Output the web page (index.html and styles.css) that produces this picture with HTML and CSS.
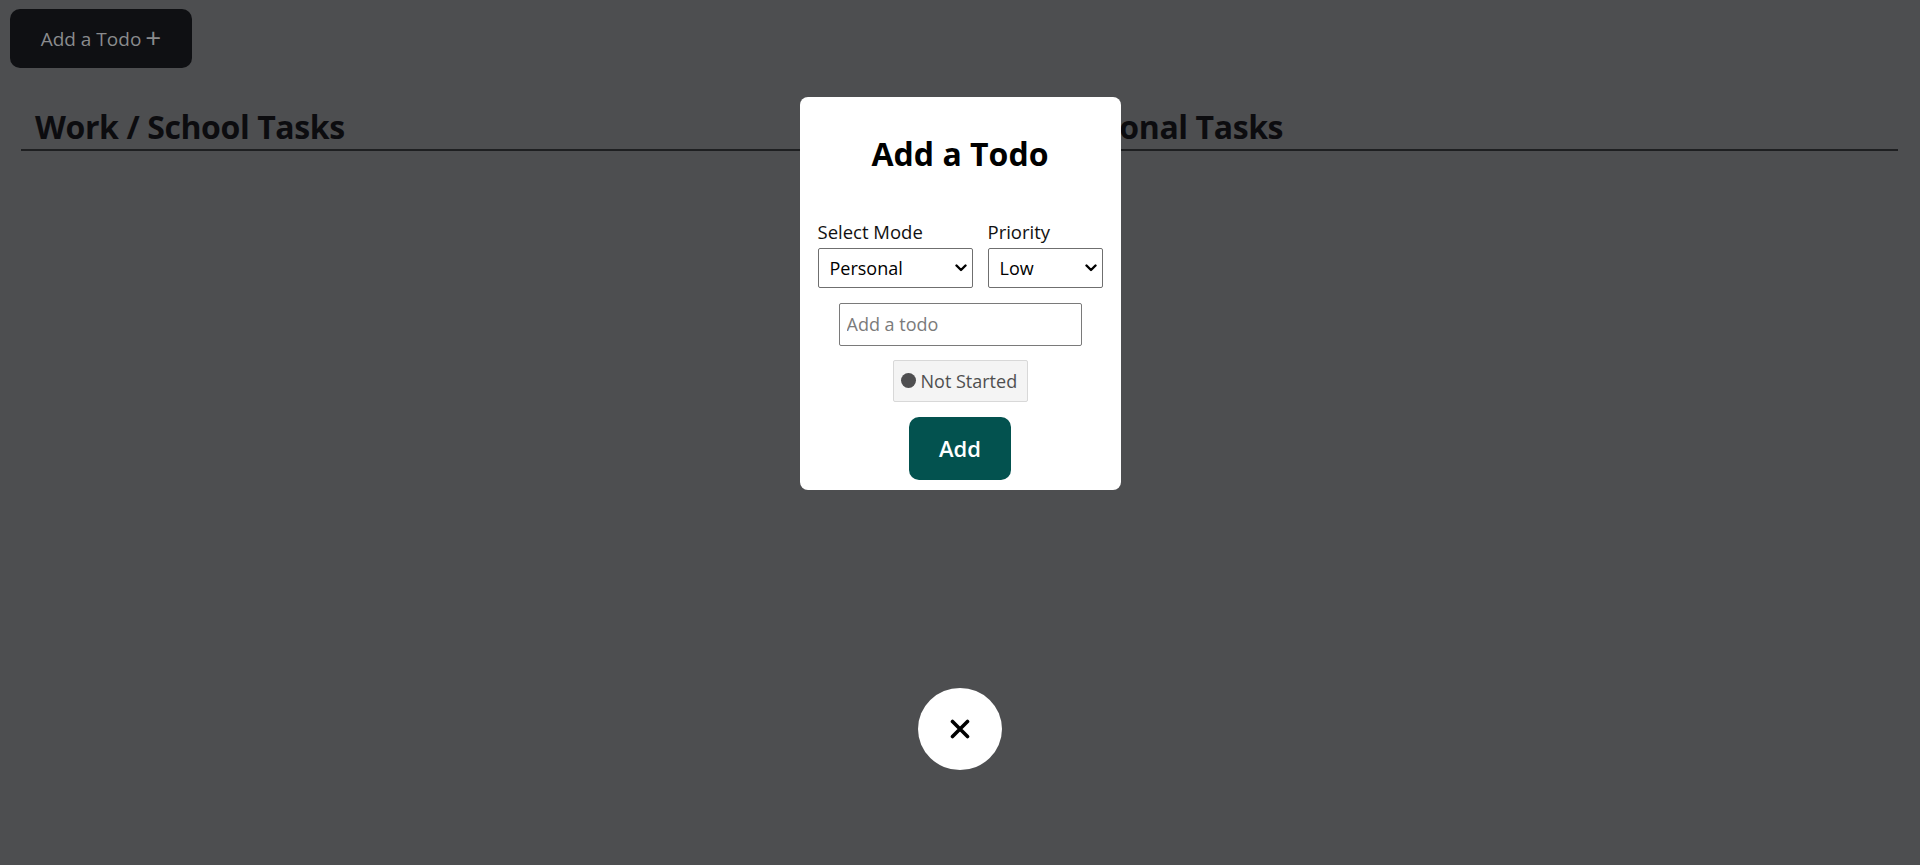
FILE: index.html
```html
<!DOCTYPE html>
<html lang="en">
<head>
<meta charset="utf-8">
<title>Todos</title>
<link rel="stylesheet" href="styles.css">
</head>
<body>
  <header class="topbar">
    <button class="open-btn">Add a Todo <span class="plus">+</span></button>
  </header>
  <main class="columns">
    <section class="column">
      <h2 class="column-title">Work / School Tasks</h2>
    </section>
    <section class="column column-right">
      <h2 class="column-title">Personal Tasks</h2>
    </section>
  </main>

  <div class="overlay">
    <form class="modal">
      <h2 class="modal-title">Add a Todo</h2>
      <div class="selects">
        <label class="field field-mode">
          <span class="field-label">Select Mode</span>
          <span class="select-wrap">
            <select class="select">
              <option>Personal</option>
              <option>Work / School</option>
            </select>
            <svg class="chevron" width="12" height="8" viewBox="0 0 12 8"><path d="M1.5 1.5 L6 6 L10.5 1.5" stroke="#000" stroke-width="2.4" fill="none" stroke-linecap="round" stroke-linejoin="round"/></svg>
          </span>
        </label>
        <label class="field field-priority">
          <span class="field-label">Priority</span>
          <span class="select-wrap">
            <select class="select">
              <option>Low</option>
              <option>Medium</option>
              <option>High</option>
            </select>
            <svg class="chevron" width="12" height="8" viewBox="0 0 12 8"><path d="M1.5 1.5 L6 6 L10.5 1.5" stroke="#000" stroke-width="2.4" fill="none" stroke-linecap="round" stroke-linejoin="round"/></svg>
          </span>
        </label>
      </div>
      <input class="todo-input" type="text" placeholder="Add a todo">
      <button type="button" class="status-btn"><span class="dot"></span>Not Started</button>
      <button type="button" class="submit-btn">Add</button>
    </form>
    <button class="close-btn" aria-label="Close">
      <svg width="20" height="20" viewBox="0 0 20 20"><path d="M2.5 2.5 L17.5 17.5 M17.5 2.5 L2.5 17.5" stroke="#000" stroke-width="3.6" stroke-linecap="round" fill="none"/></svg>
    </button>
  </div>
</body>
</html>
```

FILE: styles.css
```css
* { box-sizing: border-box; }

html, body {
  margin: 0;
  height: 100%;
}

body {
  background: #4d4e50;
  font-family: "Open Sans", "Liberation Sans", sans-serif;
  color: #0c0c0f;
  overflow: hidden;
}

.topbar {
  padding: 9px 10px 0;
}

.open-btn {
  width: 182px;
  height: 59px;
  background: #0f1013;
  color: #8a8b8d;
  border: none;
  border-radius: 10px;
  font-family: inherit;
  font-size: 19px;
  display: flex;
  align-items: center;
  justify-content: center;
  gap: 4px;
  padding: 0;
}

.plus {
  font-size: 28px;
  line-height: 1;
  margin-top: -3px;
}

.columns {
  margin: 40px 22px 0 21px;
  display: grid;
  grid-template-columns: 1fr 1fr;
  border-bottom: 2px solid #1e1f21;
}

.column-title {
  margin: 0;
  padding: 0 14px 3px;
  font-size: 32px;
  line-height: 1.2;
  font-weight: 700;
  letter-spacing: -0.4px;
  color: #0c0c0f;
}

.column-right .column-title {
  padding-left: 92px;
}

.overlay {
  position: fixed;
  inset: 0;
  display: flex;
  flex-direction: column;
  align-items: center;
}

.modal {
  margin-top: 97px;
  width: 321px;
  background: #fff;
  border-radius: 8px;
  padding: 38px 18px 10px;
  display: flex;
  flex-direction: column;
  align-items: center;
}

.modal-title {
  margin: 0;
  font-size: 32px;
  line-height: 1.2;
  font-weight: 700;
  color: #000;
}

.selects {
  margin-top: 47px;
  width: 100%;
  display: flex;
  gap: 15px;
}

.field {
  display: flex;
  flex-direction: column;
  gap: 3px;
}

.field-mode { width: 155px; }
.field-priority { width: 115px; }

.field-label {
  font-size: 18.5px;
  color: #111;
  line-height: 24.5px;
}

.select-wrap {
  position: relative;
  display: block;
}

.select {
  appearance: none;
  -webkit-appearance: none;
  display: block;
  width: 100%;
  height: 40px;
  font-family: inherit;
  font-size: 18px;
  color: #000;
  background: #fff;
  border: 1px solid #6f6f6f;
  border-radius: 2px;
  padding: 0 24px 0 11px;
}

.chevron {
  position: absolute;
  right: 6px;
  top: 16px;
  pointer-events: none;
}

.todo-input {
  margin-top: 15px;
  width: 243px;
  height: 43px;
  border: 1px solid #7a7a7a;
  border-radius: 2px;
  padding: 0 7px;
  font-family: inherit;
  font-size: 18px;
}

.todo-input::placeholder {
  color: #7b7b7b;
}

.status-btn {
  margin-top: 14px;
  width: 135px;
  height: 42px;
  background: #f4f4f4;
  border: 1px solid #d8d8d8;
  border-radius: 2px;
  padding: 0 0 0 7px;
  font-family: inherit;
  font-size: 18px;
  color: #4f4f4f;
  display: flex;
  align-items: center;
  gap: 5px;
  white-space: nowrap;
  overflow: hidden;
}

.dot {
  flex: none;
  width: 15px;
  height: 15px;
  border-radius: 50%;
  background: #4f4f51;
}

.submit-btn {
  margin-top: 15px;
  width: 102px;
  height: 63px;
  background: #03524f;
  color: #fff;
  border: none;
  border-radius: 10px;
  font-family: inherit;
  font-size: 22px;
  font-weight: 600;
}

.close-btn {
  margin-top: 198px;
  width: 84px;
  height: 82px;
  border-radius: 50%;
  background: #fff;
  border: none;
  display: flex;
  align-items: center;
  justify-content: center;
  padding: 0;
}
```
